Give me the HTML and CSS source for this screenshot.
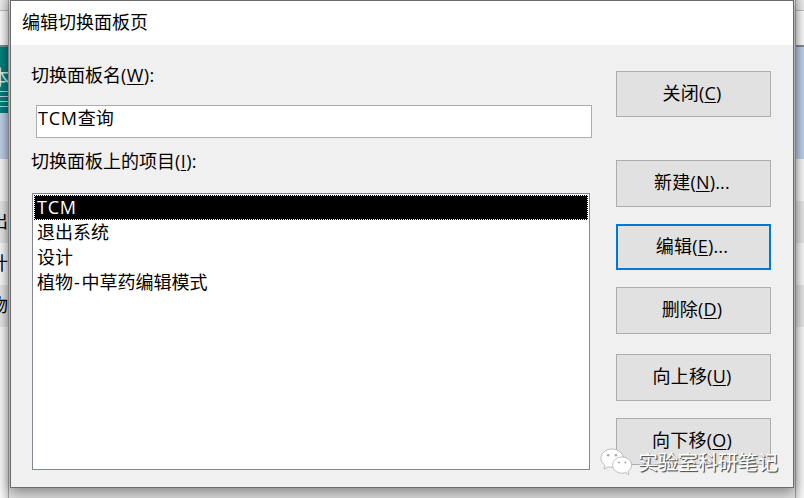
FILE: index.html
```html
<!DOCTYPE html>
<html lang="zh-CN">
<head>
<meta charset="utf-8">
<title>编辑切换面板页</title>
<link rel="stylesheet" href="styles.css">
</head>
<body>
<div class="backdrop">
  <div class="strip toolbar"></div>
  <div class="strip ribbon"></div>
  <div class="strip banner"><div class="teal"><span>本</span><i></i><i></i><i></i><i></i></div></div>
  <div class="strip row light first"></div>
  <div class="strip row">出</div>
  <div class="strip row light">计</div>
  <div class="strip row">物</div>
  <div class="strip rest"></div>
</div>
<div class="frame"></div>
<main class="dialog">
  <header class="title">编辑切换面板页</header>
  <div class="content">
    <section class="fields">
      <div class="label name-label">切换面板名<span class="latin">(<u>W</u>):</span></div>
      <div class="input"><span class="latin wide">TCM</span>查询</div>
      <div class="label items-label">切换面板上的项目<span class="latin">(<u>I</u>):</span></div>
      <ul class="list">
        <li class="selected"><span class="wide">TCM</span></li>
        <li>退出系统</li>
        <li>设计</li>
        <li>植物<span class="hyphen">-</span>中草药编辑模式</li>
      </ul>
    </section>
    <aside class="actions">
      <button class="close"><span>关闭(<u>C</u>)</span></button>
      <button class="new"><span>新建(<u>N</u>)...</span></button>
      <button class="edit"><span>编辑(<u>E</u>)...</span></button>
      <button class="delete"><span>删除(<u>D</u>)</span></button>
      <button class="up"><span>向上移(<u>U</u>)</span></button>
      <button class="down"><span>向下移(<u>O</u>)</span></button>
    </aside>
  </div>
</main>
<div class="watermark">
  <svg width="34" height="30" viewBox="0 0 34 30">
    <path class="bubble" d="M12 1C5.800 1 1 5 1 10.200c0 3 1.600 5.500 4.200 7.200L4 21l4.300-2.200c1.300.4 2.500.6 3.900.6 6.100 0 11-4.100 11-9.200S18.100 1 12 1Z"/>
    <path class="bubble" d="M22 9c-5.300 0-9.400 3.600-9.400 8.100s4.200 8.100 9.400 8.100c1.200 0 2.400-.2 3.500-.6l3.500 2-1-3.200c2.300-1.500 3.600-3.700 3.600-6.300C31.600 12.600 27.300 9 22 9Z"/>
    <g class="eyes"><circle cx="8.200" cy="7.200" r="1.300"/><circle cx="16" cy="7.200" r="1.300"/><circle cx="19" cy="14.500" r="1.100"/><circle cx="25.300" cy="14.500" r="1.100"/></g>
  </svg>
  <span>实验室科研笔记</span>
</div>
</body>
</html>
```
FILE: styles.css
```css
* { box-sizing: border-box; }
body {
  margin: 0;
  width: 804px;
  height: 498px;
  position: relative;
  overflow: hidden;
  background: #f0f0f0;
  color: #000;
  font: 18px/25px "Open Sans", "Noto Sans CJK SC", sans-serif;
}
.backdrop { height: 498px; overflow: hidden; }
.strip { width: 804px; overflow: hidden; }
.toolbar { height: 11px; background: #eaeaea; border-bottom: 1px solid #bdbdbd; }
.ribbon { height: 36px; background: #fafafa; border-bottom: 2px solid #858a8d; }
.banner { height: 112px; background: #bfd0ea; }
.teal { display: flow-root; width: 12px; height: 66px; background: #008080; color: #d5eeee; overflow: hidden; }
.teal span { display: block; width: 24px; height: 26px; margin: 18px 0 0 -10px; font-size: 20px; line-height: 26px; }
.teal i { display: block; height: 1px; margin-bottom: 4px; background: #b5dede; }
.row { height: 42px; padding-top: 8px; background: #e6e6e6; white-space: nowrap; text-indent: -10px; }
.row.light, .rest { background: #f8f8f8; }
.rest { height: 171px; }
.frame {
  position: absolute;
  left: 8px;
  top: -10px;
  width: 788px;
  height: 520px;
  border: 1px solid #9c9c9c;
  background: #dedede;
  box-shadow: 0 0 9px rgba(0, 0, 0, .3);
}
.dialog {
  position: absolute;
  left: 10px;
  top: 0;
  width: 784px;
  height: 488px;
  border: 1px solid #6b6b6b;
  background: #f0f0f0;
  box-shadow: 0 4px 13px rgba(0, 0, 0, .42);
}
.title { height: 44px; padding: 9px 11px; background: #fff; }
.content { display: flex; }
.fields { width: 605px; padding-left: 21px; }
.label { height: 25px; line-height: 25px; margin-left: -1px; }
.latin { letter-spacing: .4px; }
.wide { letter-spacing: .8px; }
.hyphen { margin: 0 1px; letter-spacing: .6px; }
.name-label { margin-top: 18px; }
.input { width: 556px; height: 33px; margin: 17px 0 0 4px; border: 1px solid #abadb3; background: #fff; padding-left: 1px; line-height: 25px; }
.items-label { margin-top: 11px; }
.list { list-style: none; width: 558px; height: 277px; margin: 19px 0 0; padding: 1px; border: 1px solid #828790; background: #fff; }
.list li { height: 25px; padding-left: 3px; line-height: 25px; }
.list .selected {
  height: 25px;
  padding: 1px;
  color: #fff;
  background: repeating-conic-gradient(#fff 0 25%, #000 0 50%) 0 0 / 2px 2px;
}
.selected span { display: block; height: 23px; padding-left: 2px; background: #000; line-height: 23px; }
u { text-decoration: underline; text-decoration-thickness: 1px; text-underline-offset: 2px; }
.actions { width: 155px; }
button { display: block; width: 155px; height: 47px; padding: 0 3px 3px 0; border: 1px solid #adadad; border-radius: 0; background: #e1e1e1; color: #000; font: inherit; letter-spacing: .2px; }
button span { display: block; }
.close { margin-top: 26px; height: 46px; padding-bottom: 1px; }
.new { margin-top: 43px; }
.edit { height: 46px; margin-top: 17px; border: 2px solid #0078d7; padding-bottom: 2px; }
.delete { margin-top: 17px; }
.up { margin-top: 20px; padding-bottom: 2px; }
.down { margin-top: 17px; padding-bottom: 2px; }
.watermark { position: absolute; left: 600px; top: 448px; display: flex; gap: 4px; color: #fff; font-size: 20px; line-height: 30px; white-space: nowrap; text-shadow: 1px 1px 1px #555, 1px 1px 0 #777; }
.bubble { fill: #fff; stroke: #999; stroke-width: .6; }
.eyes { fill: #aaa; }
```
